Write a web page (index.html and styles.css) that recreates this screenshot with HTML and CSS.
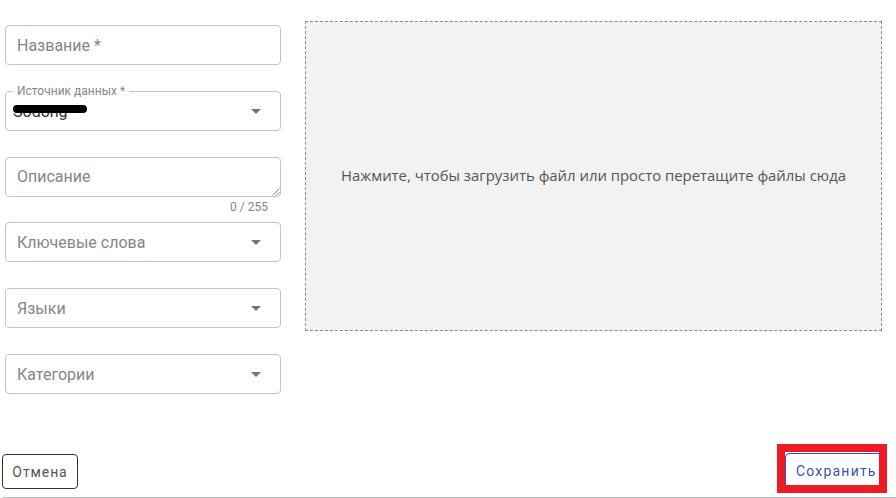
FILE: index.html
```html
<!DOCTYPE html>
<html lang="ru">
<head>
<meta charset="utf-8">
<link rel="stylesheet" href="styles.css">
</head>
<body>
<div class="page">
  <div class="main">
    <div class="form">
      <div class="field"><span class="placeholder">Название *</span></div>
      <div class="field filled">
        <span class="float-label">Источник данных *</span>
        <span class="value">Sodong<span class="redact"></span></span>
        <svg class="arrow" width="10" height="5" viewBox="0 0 10 5"><polygon points="0,0 10,0 5,5" fill="#757575"/></svg>
      </div>
      <div class="textarea-wrap">
        <div class="field"><span class="placeholder">Описание</span>
          <svg class="resize" width="9" height="9" viewBox="0 0 9 9"><path d="M8.5 1.5L1.5 8.5M8.5 5L5 8.5" stroke="#888" stroke-width="1" fill="none"/></svg>
        </div>
        <div class="counter">0 / 255</div>
      </div>
      <div class="field"><span class="placeholder">Ключевые слова</span>
        <svg class="arrow" width="10" height="5" viewBox="0 0 10 5"><polygon points="0,0 10,0 5,5" fill="#757575"/></svg>
      </div>
      <div class="field"><span class="placeholder">Языки</span>
        <svg class="arrow" width="10" height="5" viewBox="0 0 10 5"><polygon points="0,0 10,0 5,5" fill="#757575"/></svg>
      </div>
      <div class="field"><span class="placeholder">Категории</span>
        <svg class="arrow" width="10" height="5" viewBox="0 0 10 5"><polygon points="0,0 10,0 5,5" fill="#757575"/></svg>
      </div>
    </div>
    <div class="dropzone">Нажмите, чтобы загрузить файл или просто перетащите файлы сюда</div>
  </div>
  <div class="actions">
    <button class="btn-cancel">Отмена</button>
    <div class="highlight">
      <button class="btn-save">Сохранить</button>
    </div>
  </div>
</div>
</body>
</html>
```
FILE: styles.css
```css
html, body {
  margin: 0;
  padding: 0;
  background: #fff;
}
body {
  font-family: Roboto, "Liberation Sans", sans-serif;
  width: 896px;
  height: 498px;
  overflow: hidden;
}
.page {
  height: 498px;
  box-sizing: border-box;
  padding-top: 21px;
  display: flex;
  flex-direction: column;
}
.main {
  display: flex;
  gap: 24px;
  padding-left: 5px;
}
.form {
  width: 276px;
  padding-top: 4px;
  display: flex;
  flex-direction: column;
  gap: 26px;
}
.field {
  position: relative;
  height: 40px;
  box-sizing: border-box;
  border: 1px solid #c4c4c4;
  border-radius: 4px;
  display: flex;
  align-items: center;
  padding: 0 17px 0 11px;
}
.placeholder {
  flex: 1;
  font-size: 16px;
  color: #868686;
}
.arrow {
  flex: none;
  margin-right: 2px;
}
.float-label {
  position: absolute;
  left: 7px;
  top: -8px;
  background: #fff;
  padding: 0 4px;
  font-size: 12px;
  line-height: 14px;
  color: #868686;
}
.filled .value {
  position: relative;
  flex: 1;
  font-size: 16px;
  color: #333;
  margin-left: -4px;
}
.redact {
  position: absolute;
  left: 0;
  top: 3px;
  width: 74px;
  height: 8px;
  border-radius: 4px;
  background: #000;
}
.textarea-wrap {
  display: flex;
  flex-direction: column;
  margin-bottom: -24px;
}
.textarea-wrap .field {
  align-items: flex-start;
  padding-top: 9px;
}
.resize {
  position: absolute;
  right: 0;
  bottom: 0;
}
.counter {
  height: 20px;
  margin-top: 3px;
  text-align: right;
  padding-right: 13px;
  font-size: 12px;
  color: #868686;
  line-height: 14px;
}
.dropzone {
  width: 577px;
  height: 310px;
  box-sizing: border-box;
  border: 1px dashed #8a8a8a;
  background: #f2f2f2;
  display: flex;
  align-items: center;
  justify-content: center;
  font-family: "Open Sans", "Noto Sans", sans-serif;
  font-size: 14.9px;
  color: #555;
  padding-bottom: 2px;
}
.actions {
  margin-top: auto;
  height: 53px;
  display: flex;
  justify-content: space-between;
  align-items: flex-start;
  border-bottom: 1px solid #b6bec6;
  margin-left: 3px;
}
.btn-cancel {
  margin-top: 10px;
  margin-left: -1px;
  width: 76px;
  height: 35px;
  border: 1px solid #333;
  border-radius: 4px;
  background: #fff;
  font-family: Roboto, "Liberation Sans", sans-serif;
  font-size: 14px;
  letter-spacing: 0.9px;
  color: #555;
  padding: 0;
}
.highlight {
  width: 110px;
  height: 49px;
  box-sizing: border-box;
  border: 8px solid #ed1c24;
  margin-right: 9px;
  background: #fff;
  overflow: hidden;
  padding: 1px 0 0 0;
}
.btn-save {
  display: block;
  width: 100px;
  height: 40px;
  border: 1px solid #3f51b5;
  border-radius: 4px 0 0 0;
  background: #fff;
  font-family: Roboto, "Liberation Sans", sans-serif;
  font-size: 14px;
  letter-spacing: 1.2px;
  color: #3f51b5;
  text-align: left;
  padding: 0 0 5px 10px;
}
```
